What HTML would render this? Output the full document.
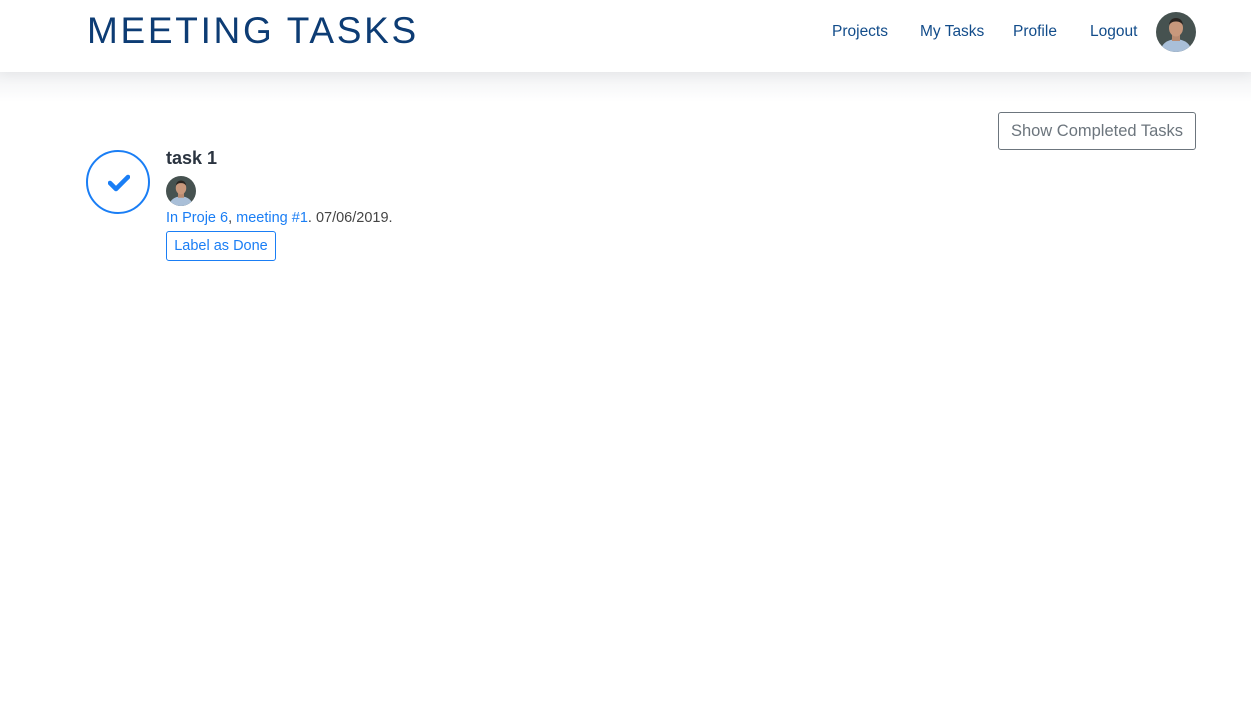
<!DOCTYPE html>
<html><head><meta charset="utf-8"><style>
*{box-sizing:border-box;margin:0;padding:0}
body{width:1251px;height:718px;background:#fff;font-family:"Liberation Sans",sans-serif;position:relative;overflow:hidden}
.hdr{position:absolute;left:0;top:0;width:1251px;height:72px;background:#fff;box-shadow:0 3px 12px rgba(0,0,0,.05)}
.shade{position:absolute;left:0;top:72px;width:1251px;height:30px;background:linear-gradient(#f1f2f4,#fff)}
.logo{position:absolute;left:87px;top:10px;font-size:37px;letter-spacing:2.7px;color:#0d3c74;font-weight:normal}
.nav{position:absolute;top:23px;font-size:15.5px;color:#124c8a}
.btn{position:absolute;left:998px;top:112px;width:198px;height:38px;border:1px solid #6c757d;border-radius:3px;color:#6c757d;font-size:16.5px;text-align:center;line-height:36px}
.circ{position:absolute;left:86px;top:150px;width:64px;height:64px;border:2px solid #1a7ef5;border-radius:50%}
.t{position:absolute;left:166px;top:148px;font-size:18px;font-weight:bold;color:#2b3440}
.meta{position:absolute;left:166px;top:210px;font-size:14.5px;color:#444}
.meta a{color:#1a7ef5;text-decoration:none}
.done{position:absolute;left:166px;top:231px;width:110px;height:30px;border:1px solid #1a7ef5;border-radius:3px;color:#1a7ef5;font-size:14.5px;text-align:center;line-height:28px}
</style></head><body>
<div class="shade"></div>
<div class="hdr">
<div class="logo">MEETING TASKS</div>
<div class="nav" style="left:832px">Projects</div>
<div class="nav" style="left:920px">My Tasks</div>
<div class="nav" style="left:1013px">Profile</div>
<div class="nav" style="left:1090px">Logout</div>
<svg style="position:absolute;left:1156px;top:12px" width="40" height="40" viewBox="0 0 40 40"><defs><clipPath id="c"><circle cx="20" cy="20" r="20"/></clipPath></defs><g clip-path="url(#c)"><rect width="40" height="40" fill="#465250"/><path d="M4 40 Q6 28 20 27 Q34 28 36 40Z" fill="#a9bfd8"/><rect x="16" y="22" width="8" height="7" fill="#b88a70"/><ellipse cx="20" cy="16" rx="7" ry="8.5" fill="#c8987c"/><path d="M13 13 Q14 6 20 6 Q26 6 27 13 Q24 9 20 9.5 Q16 9 13 13Z" fill="#2a2420"/></g></svg>
</div>
<div class="btn">Show Completed Tasks</div>
<div class="circ"><svg style="position:absolute;left:20px;top:22px" width="22" height="18" viewBox="0 0 22 18"><path d="M2 9 L8 15 L20 3" stroke="#1a7ef5" stroke-width="4.5" fill="none" stroke-linecap="round" stroke-linejoin="round"/></svg></div>
<div class="t">task 1</div>
<svg style="position:absolute;left:166px;top:176px" width="30" height="30" viewBox="0 0 40 40"><defs><clipPath id="d"><circle cx="20" cy="20" r="20"/></clipPath></defs><g clip-path="url(#d)"><rect width="40" height="40" fill="#465250"/><path d="M4 40 Q6 28 20 27 Q34 28 36 40Z" fill="#a9bfd8"/><rect x="16" y="22" width="8" height="7" fill="#b88a70"/><ellipse cx="20" cy="16" rx="7" ry="8.5" fill="#c8987c"/><path d="M13 13 Q14 6 20 6 Q26 6 27 13 Q24 9 20 9.5 Q16 9 13 13Z" fill="#2a2420"/></g></svg>
<div class="meta"><a>In</a> <a>Proje 6</a>, <a>meeting #1</a>. 07/06/2019.</div>
<div class="done">Label as Done</div>
</body></html>
